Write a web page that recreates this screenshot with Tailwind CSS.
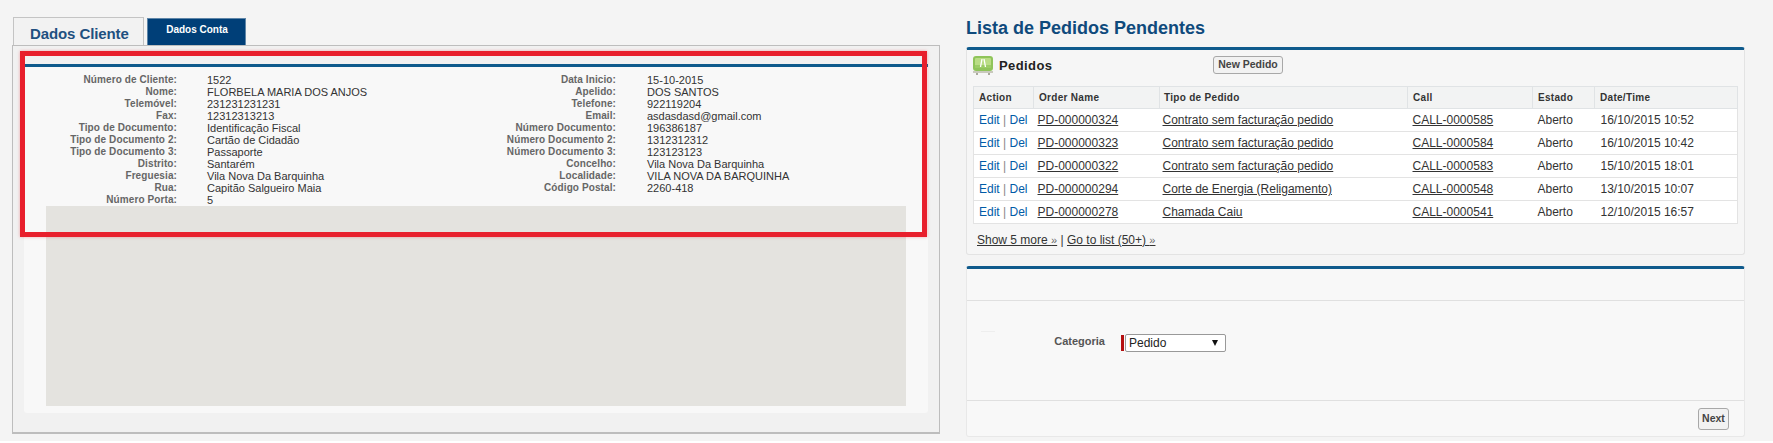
<!DOCTYPE html>
<html lang="en">
<head>
    <meta charset="UTF-8">
    <title>Dados Cliente</title>
    <script src="https://cdn.jsdelivr.net/npm/@tailwindcss/browser@4"></script>
</head>
<body class="bg-[#f4f4f4] font-['Liberation_Sans',Arial,sans-serif] h-[443px] overflow-hidden relative">

<!-- Highlight drawn over the screenshot -->
<div class="absolute left-[20px] top-[51px] w-[907px] h-[186px] border-[5px] border-[#e81f2c] shadow-[0_0_3px_rgba(232,31,44,0.35)] z-10"></div>

<div class="flex items-start h-[441px] bg-[#f4f4f4]">
    <!-- Left column -->
    <div class="w-[928px] ml-[12px] shrink-0 pt-[17px]">
        <div class="flex items-end gap-[3px] pl-[1px] h-[28px]">
            <div class="w-[131px] h-[28px] pl-[16px] pt-[5px] bg-[#f2f2f2] border border-b-0 border-[#c4c4c4] text-[15px] tracking-[-0.1px] leading-[22px] font-bold text-[#1f5080]">Dados Cliente</div>
            <div class="w-[99px] h-[27px] pl-[1px] bg-[#003f78] border-t border-x border-[#5f86a8] text-white text-[10px] font-bold text-center leading-[22px]">Dados Conta</div>
        </div>
        <div class="h-[389px] bg-[#f1f1f1] border border-[#bdbdbd] border-b-2 px-[11px] pt-[18px]">
            <div class="h-[349px] bg-[#f8f8f8] border-t-[3px] border-[#0f5a8c] rounded-b-[3px] px-[22px] pt-[7px]">
                <div class="grid grid-cols-2 h-[132px] text-[11px] leading-[12px]">
                    <dl class="grid grid-cols-[131px_1fr] gap-x-[30px] content-start">
                        <dt class="text-right font-bold text-[10px] text-[#666] tracking-[0.1px]">Número de Cliente:</dt><dd class="text-[#333]">1522</dd>
                        <dt class="text-right font-bold text-[10px] text-[#666] tracking-[0.1px]">Nome:</dt><dd class="text-[#333]">FLORBELA MARIA DOS ANJOS</dd>
                        <dt class="text-right font-bold text-[10px] text-[#666] tracking-[0.1px]">Telemóvel:</dt><dd class="text-[#333]">231231231231</dd>
                        <dt class="text-right font-bold text-[10px] text-[#666] tracking-[0.1px]">Fax:</dt><dd class="text-[#333]">12312313213</dd>
                        <dt class="text-right font-bold text-[10px] text-[#666] tracking-[0.1px]">Tipo de Documento:</dt><dd class="text-[#333]">Identificação Fiscal</dd>
                        <dt class="text-right font-bold text-[10px] text-[#666] tracking-[0.1px]">Tipo de Documento 2:</dt><dd class="text-[#333]">Cartão de Cidadão</dd>
                        <dt class="text-right font-bold text-[10px] text-[#666] tracking-[0.1px]">Tipo de Documento 3:</dt><dd class="text-[#333]">Passaporte</dd>
                        <dt class="text-right font-bold text-[10px] text-[#666] tracking-[0.1px]">Distrito:</dt><dd class="text-[#333]">Santarém</dd>
                        <dt class="text-right font-bold text-[10px] text-[#666] tracking-[0.1px]">Freguesia:</dt><dd class="text-[#333]">Vila Nova Da Barquinha</dd>
                        <dt class="text-right font-bold text-[10px] text-[#666] tracking-[0.1px]">Rua:</dt><dd class="text-[#333]">Capitão Salgueiro Maia</dd>
                        <dt class="text-right font-bold text-[10px] text-[#666] tracking-[0.1px]">Número Porta:</dt><dd class="text-[#333]">5</dd>
                    </dl>
                    <dl class="grid grid-cols-[140px_1fr] gap-x-[31px] content-start">
                        <dt class="text-right font-bold text-[10px] text-[#666] tracking-[0.1px]">Data Inicio:</dt><dd class="text-[#333]">15-10-2015</dd>
                        <dt class="text-right font-bold text-[10px] text-[#666] tracking-[0.1px]">Apelido:</dt><dd class="text-[#333]">DOS SANTOS</dd>
                        <dt class="text-right font-bold text-[10px] text-[#666] tracking-[0.1px]">Telefone:</dt><dd class="text-[#333]">922119204</dd>
                        <dt class="text-right font-bold text-[10px] text-[#666] tracking-[0.1px]">Email:</dt><dd class="text-[#333]">asdasdasd@gmail.com</dd>
                        <dt class="text-right font-bold text-[10px] text-[#666] tracking-[0.1px]">Número Documento:</dt><dd class="text-[#333]">196386187</dd>
                        <dt class="text-right font-bold text-[10px] text-[#666] tracking-[0.1px]">Número Documento 2:</dt><dd class="text-[#333]">1312312312</dd>
                        <dt class="text-right font-bold text-[10px] text-[#666] tracking-[0.1px]">Número Documento 3:</dt><dd class="text-[#333]">123123123</dd>
                        <dt class="text-right font-bold text-[10px] text-[#666] tracking-[0.1px]">Concelho:</dt><dd class="text-[#333]">Vila Nova Da Barquinha</dd>
                        <dt class="text-right font-bold text-[10px] text-[#666] tracking-[0.1px]">Localidade:</dt><dd class="text-[#333]">VILA NOVA DA BARQUINHA</dd>
                        <dt class="text-right font-bold text-[10px] text-[#666] tracking-[0.1px]">Código Postal:</dt><dd class="text-[#333]">2260-418</dd>
                    </dl>
                </div>
                <div class="h-[200px] bg-[#e4e3df]"></div>
            </div>
        </div>
    </div>

    <!-- Right column -->
    <div class="w-[779px] ml-[26px] shrink-0">
        <h1 class="h-[47px] pt-[17px] text-[18px] leading-[22px] font-bold text-[#0f4a7c]">Lista de Pedidos Pendentes</h1>

        <div class="h-[208px] bg-[#f6f6f6] border border-t-[3px] border-[#e3e3e3] border-t-[#0f5a8c] rounded-[3px] px-[5px]">
            <div class="flex items-center h-[30px] mb-[6px] pl-[1px]">
                <svg width="20" height="19" viewBox="0 0 20 19" class="shrink-0">
                    <rect x="3" y="14" width="2" height="5" fill="#a9a99c"/>
                    <rect x="15" y="14" width="2" height="5" fill="#a9a99c"/>
                    <rect x="0" y="15" width="20" height="2" fill="#c9c9bd"/>
                    <rect x="0" y="0" width="20" height="15" rx="3" fill="#8fc45a"/>
                    <rect x="2" y="2" width="16" height="10" rx="1" fill="#b9dd85"/>
                    <rect x="2" y="9" width="16" height="3" fill="#9ccc66"/>
                    <path d="M7.5 11 9 3M12.5 11 11 3" stroke="#fff" stroke-width="1.3" fill="none"/>
                </svg>
                <h2 class="ml-[6px] pt-[1px] w-[214px] text-[13px] font-bold text-[#222] tracking-[0.4px]">Pedidos</h2>
                <button class="h-[18px] w-[70px] bg-[#f2f2f2] border border-[#a8a8a8] rounded-[3px] text-[10.5px] font-bold text-[#444]">New Pedido</button>
            </div>
            <table class="ml-[1px] w-[765px] table-fixed border-collapse text-[12px] text-[#333]">
                <thead>
                    <tr class="h-[22px] bg-[#f2f3f3] text-[10px] text-left text-[#333]">
                        <th class="w-[60px] pl-[5px] font-bold border border-[#e0e3e5] border-r-0 tracking-[0.3px]">Action</th>
                        <th class="w-[126px] pl-[5px] font-bold border-y border-l border-[#e0e3e5] tracking-[0.3px]">Order Name</th>
                        <th class="w-[248px] pl-[4px] font-bold border-y border-l border-[#e0e3e5] tracking-[0.3px]">Tipo de Pedido</th>
                        <th class="w-[125px] pl-[5px] font-bold border-y border-l border-[#e0e3e5] tracking-[0.3px]">Call</th>
                        <th class="w-[62px] pl-[5px] font-bold border-y border-l border-[#e0e3e5] tracking-[0.3px]">Estado</th>
                        <th class="pl-[5px] font-bold border border-[#e0e3e5] tracking-[0.3px]">Date/Time</th>
                    </tr>
                </thead>
                <tbody class="bg-white">
                    <tr class="h-[23px] border border-[#e3e3e3]">
                        <td class="pl-[5px] text-[#015ba7]">Edit <span class="text-[#888]">|</span> Del</td>
                        <td class="pl-[4px]"><a class="underline">PD-000000324</a></td>
                        <td class="pl-[3px]"><a class="underline">Contrato sem facturação pedido</a></td>
                        <td class="pl-[5px]"><a class="underline">CALL-0000585</a></td>
                        <td class="pl-[5px]">Aberto</td>
                        <td class="pl-[6px]">16/10/2015 10:52</td>
                    </tr>
                    <tr class="h-[23px] border border-[#e3e3e3]">
                        <td class="pl-[5px] text-[#015ba7]">Edit <span class="text-[#888]">|</span> Del</td>
                        <td class="pl-[4px]"><a class="underline">PD-000000323</a></td>
                        <td class="pl-[3px]"><a class="underline">Contrato sem facturação pedido</a></td>
                        <td class="pl-[5px]"><a class="underline">CALL-0000584</a></td>
                        <td class="pl-[5px]">Aberto</td>
                        <td class="pl-[6px]">16/10/2015 10:42</td>
                    </tr>
                    <tr class="h-[23px] border border-[#e3e3e3]">
                        <td class="pl-[5px] text-[#015ba7]">Edit <span class="text-[#888]">|</span> Del</td>
                        <td class="pl-[4px]"><a class="underline">PD-000000322</a></td>
                        <td class="pl-[3px]"><a class="underline">Contrato sem facturação pedido</a></td>
                        <td class="pl-[5px]"><a class="underline">CALL-0000583</a></td>
                        <td class="pl-[5px]">Aberto</td>
                        <td class="pl-[6px]">15/10/2015 18:01</td>
                    </tr>
                    <tr class="h-[23px] border border-[#e3e3e3]">
                        <td class="pl-[5px] text-[#015ba7]">Edit <span class="text-[#888]">|</span> Del</td>
                        <td class="pl-[4px]"><a class="underline">PD-000000294</a></td>
                        <td class="pl-[3px]"><a class="underline">Corte de Energia (Religamento)</a></td>
                        <td class="pl-[5px]"><a class="underline">CALL-0000548</a></td>
                        <td class="pl-[5px]">Aberto</td>
                        <td class="pl-[6px]">13/10/2015 10:07</td>
                    </tr>
                    <tr class="h-[23px] border border-[#e3e3e3]">
                        <td class="pl-[5px] text-[#015ba7]">Edit <span class="text-[#888]">|</span> Del</td>
                        <td class="pl-[4px]"><a class="underline">PD-000000278</a></td>
                        <td class="pl-[3px]"><a class="underline">Chamada Caiu</a></td>
                        <td class="pl-[5px]"><a class="underline">CALL-0000541</a></td>
                        <td class="pl-[5px]">Aberto</td>
                        <td class="pl-[6px]">12/10/2015 16:57</td>
                    </tr>
                </tbody>
            </table>
            <div class="pt-[9px] pl-[5px] text-[12px] leading-[14px] text-[#333]"><a class="underline">Show 5 more <span class="text-[11px] text-[#666]">»</span></a> | <a class="underline">Go to list (50+) <span class="text-[11px] text-[#666]">»</span></a></div>
        </div>

        <div class="mt-[11px] h-[171px] bg-[#f8f8f8] border border-t-[3px] border-[#e8e8e8] border-t-[#0f5a8c] rounded-[3px] flex flex-col">
            <div class="h-[32px] shrink-0 border-b border-[#e0e0e0]"></div>
            <div class="relative flex-1 flex items-start pt-[33px]">
                <div class="absolute left-[14px] top-[30px] w-[14px] h-px bg-[#eeeeee]"></div>
                <label class="w-[138px] text-right text-[11px] font-bold text-[#555] leading-[14px]">Categoria</label>
                <div class="relative ml-[16px] flex items-center h-[18px] gap-px">
                    <div class="w-[3px] h-[16px] bg-[#b40f0f]"></div>
                    <select class="appearance-none w-[101px] h-[18px] bg-white border border-[#999] rounded-[2px] pl-[3px] text-[12px] leading-[14px] text-[#222]">
                        <option>Pedido</option>
                    </select>
                    <svg width="6" height="6" viewBox="0 0 6 6" class="absolute right-[8px] top-[6px] pointer-events-none"><path d="M0 0h6L3 6z" fill="#111"/></svg>
                </div>
            </div>
            <div class="h-[36px] shrink-0 border-t border-[#e0e0e0] flex justify-end items-start pt-[7px] pr-[15px]">
                <button class="w-[31px] h-[22px] bg-[#f2f2f2] border border-[#a8a8a8] rounded-[3px] text-[10.5px] font-bold text-[#444]">Next</button>
            </div>
        </div>
    </div>
</div>
<div class="h-[2px] bg-white"></div>
</body>
</html>
